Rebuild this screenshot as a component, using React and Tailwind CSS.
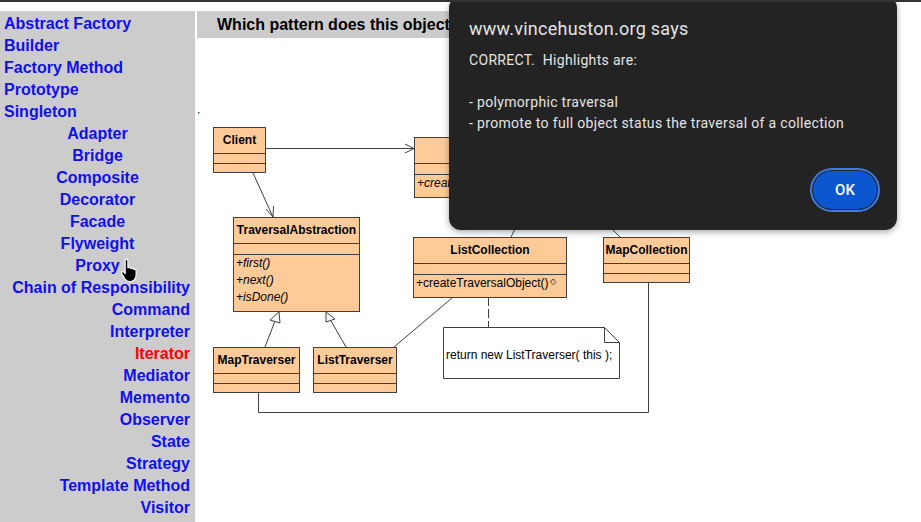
import React from 'react'

const FILL = '#fecb98'
const LINE = '#3f3f3f'

const patterns = [
  ['Abstract Factory', 'l'],
  ['Builder', 'l'],
  ['Factory Method', 'l'],
  ['Prototype', 'l'],
  ['Singleton', 'l'],
  ['Adapter', 'c'],
  ['Bridge', 'c'],
  ['Composite', 'c'],
  ['Decorator', 'c'],
  ['Facade', 'c'],
  ['Flyweight', 'c'],
  ['Proxy', 'c'],
  ['Chain of Responsibility', 'r'],
  ['Command', 'r'],
  ['Interpreter', 'r'],
  ['Iterator', 'r', true],
  ['Mediator', 'r'],
  ['Memento', 'r'],
  ['Observer', 'r'],
  ['State', 'r'],
  ['Strategy', 'r'],
  ['Template Method', 'r'],
  ['Visitor', 'r'],
]

function ClassBox({ x, y, w, h = [26, 10, 9], name, methods = [], italic = false, diamond = false }) {
  const y1 = y + h[0]
  const y2 = y1 + h[1]
  const y3 = y2 + h[2]
  return (
    <g>
      <rect x={x + 0.5} y={y + 0.5} width={w} height={y3 - y} fill={FILL} stroke={LINE} />
      <line x1={x} y1={y1 + 0.5} x2={x + w} y2={y1 + 0.5} stroke={LINE} />
      <line x1={x} y1={y2 + 0.5} x2={x + w} y2={y2 + 0.5} stroke={LINE} />
      {name && (
        <text x={x + w / 2 + 0.5} y={y + 17} textAnchor="middle" fontSize="12" fontWeight="bold"
          fontFamily="'Liberation Sans', Arial, sans-serif" fill="#000">{name}</text>
      )}
      {methods.map((m, i) => (
        <text key={m} x={x + 3} y={y2 + 13 + i * 17} fontSize="12" fontStyle={italic ? 'italic' : 'normal'}
          fontFamily="'Liberation Sans', Arial, sans-serif" fill="#000">
          {m}
          {diamond && <tspan fontSize="8" dy="-3" dx="1">{'\u25C7'}</tspan>}
        </text>
      ))}
    </g>
  )
}

function Diagram() {
  return (
    <svg width="700" height="400" viewBox="197 38 700 400" className="block">
      <rect x="198" y="112" width="1.5" height="1.5" fill="#2a6a2a" />

      {/* associations */}
      <line x1="265" y1="148.5" x2="414" y2="148.5" stroke={LINE} />
      <polyline points="405,144 414,148.5 405,153" fill="none" stroke={LINE} />
      <line x1="253" y1="173" x2="273" y2="217" stroke={LINE} />
      <polyline points="266,209 273,217 273.5,206" fill="none" stroke={LINE} />

      {/* inheritance */}
      <line x1="265" y1="347" x2="275" y2="321" stroke={LINE} />
      <polygon points="279,312 270,320 280,323" fill="#fff" stroke={LINE} />
      <line x1="346" y1="347" x2="331" y2="321" stroke={LINE} />
      <polygon points="326,312 326,322 335,319" fill="#fff" stroke={LINE} />

      <line x1="452" y1="298" x2="394" y2="347" stroke={LINE} />
      <line x1="511" y1="237" x2="531" y2="197" stroke={LINE} />
      <line x1="620" y1="237" x2="580" y2="197" stroke={LINE} />

      <polyline points="648.5,282 648.5,412.5 258.5,412.5 258.5,392" fill="none" stroke={LINE} />
      <line x1="488.5" y1="297" x2="488.5" y2="327" stroke={LINE} strokeDasharray="9 3" />

      <ClassBox x={213} y={127} w={52} name="Client" />
      <ClassBox x={414} y={137} w={180} h={[26, 11, 23]} name="Collection"
        methods={['+createTraversalObject()']} italic />
      <ClassBox x={233} y={217} w={126} h={[26, 11, 57]} name="TraversalAbstraction"
        methods={['+first()', '+next()', '+isDone()']} italic />
      <ClassBox x={413} y={237} w={153} h={[26, 11, 23]} name="ListCollection"
        methods={['+createTraversalObject()']} diamond />
      <ClassBox x={603} y={237} w={86} name="MapCollection" />
      <ClassBox x={213} y={347} w={86} name="MapTraverser" />
      <ClassBox x={313} y={347} w={83} name="ListTraverser" />

      {/* note */}
      <path d="M443.5 327.5 H604.5 L619.5 342.5 V378.5 H443.5 Z" fill="#fff" stroke={LINE} />
      <polyline points="604.5,327.5 604.5,342.5 619.5,342.5" fill="none" stroke={LINE} />
      <text x="446" y="359" fontSize="12" fontFamily="'Liberation Sans', Arial, sans-serif" fill="#000">
        return new ListTraverser( this );
      </text>
    </svg>
  )
}

function HandCursor() {
  return (
    <svg width="22" height="25" viewBox="0 0 20 24" className="absolute left-[120px] top-[256px]">
      <path
        d="M5.2 1.2c1 0 1.8.8 1.8 1.8v6.3c.9-.6 2.3-.3 2.7.8.9-.6 2.3-.2 2.7.8 1-.5 2.4.1 2.5 1.3v4.2c0 3.4-2.3 6.2-5.5 6.2H8.6c-2 0-3.3-1-4.3-2.4L1.1 15.2c-.6-.9 0-2.1 1.1-2.1.6 0 1.1.3 1.4.8l.8 1.2V3c0-1 .8-1.8 1.8-1.8z"
        fill="#000" stroke="#fff" strokeWidth="1.1" strokeLinejoin="round"
      />
    </svg>
  )
}

function AlertDialog() {
  return (
    <div className="absolute left-[449px] top-[-6px] w-[448px] h-[234px] rounded-[12px] bg-[#232323] shadow-[0_2px_6px_rgba(0,0,0,0.35)] pl-[20px] pt-[21px] font-['Roboto',sans-serif] text-[#e3e3e3]">
      <div className="text-[18px] leading-[24px] tracking-[0.25px]">www.vincehuston.org says</div>
      <div className="mt-[9px] text-[14px] leading-[21px] tracking-[0.33px] whitespace-pre">
        {'CORRECT.  Highlights are:\n\n- polymorphic traversal\n- promote to full object status the traversal of a collection'}
      </div>
      <div className="flex justify-end pr-[20px] mt-[37px]">
        <button className="w-[64px] h-[38px] rounded-full bg-[#0b57d0] text-white text-[15px] font-medium ring-2 ring-[#3d7ce4] ring-offset-1 ring-offset-[#232323]">
          OK
        </button>
      </div>
    </div>
  )
}

export default function App() {
  return (
    <div className="relative w-[921px] h-[522px] overflow-hidden bg-white border-t-2 border-[#333] font-['Liberation_Sans',Arial,sans-serif]">
      <div className="flex pt-[9px]">
        <div className="w-[195px] shrink-0 bg-[#cccccc] pt-[2px] pb-10 mr-[2px]">
          {patterns.map(([name, align, active]) => (
            <div
              key={name}
              className={
                'text-[16px] leading-[22px] font-bold ' +
                (align === 'l' ? 'text-left pl-[4px] ' : align === 'c' ? 'text-center ' : 'text-right pr-[5px] ') +
                (active ? 'text-[#ff0000]' : 'text-[#1010ee]')
              }
            >
              {name}
            </div>
          ))}
        </div>
        <div className="flex-1 min-w-0">
          <div className="w-[660px] h-[27px] bg-[#cccccc] pl-[20px] text-[16px] leading-[27px] font-bold text-black">
            <div className="w-[232px] overflow-hidden whitespace-nowrap">
              Which pattern does this object diagram represent?
            </div>
          </div>
          <Diagram />
        </div>
      </div>
      <HandCursor />
      <AlertDialog />
    </div>
  )
}
